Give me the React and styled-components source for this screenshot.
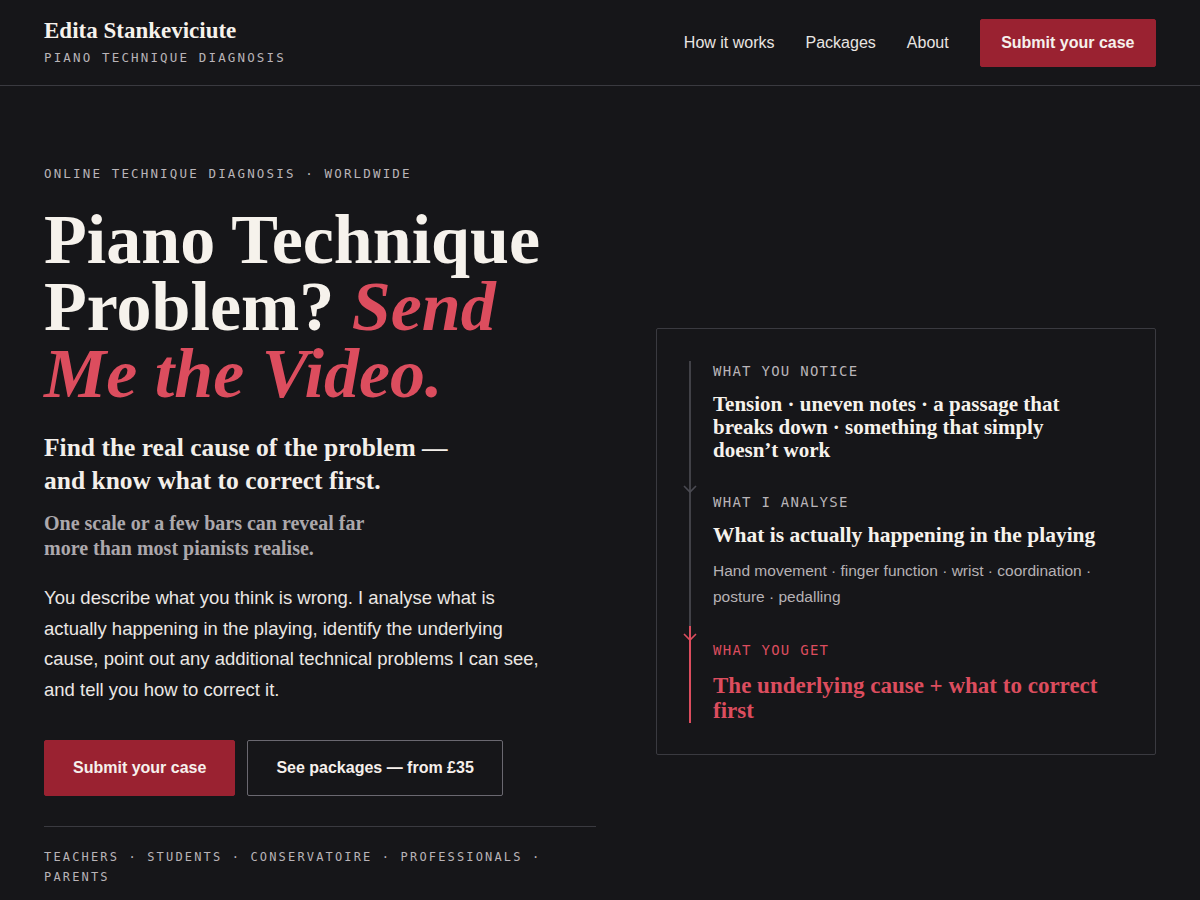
import React from "react";
import styled, { createGlobalStyle } from "styled-components";

const serif = `"Liberation Serif", "DejaVu Serif", serif`;
const sans = `"Liberation Sans", Arial, sans-serif`;
const mono = `"DejaVu Sans Mono", "Liberation Mono", monospace`;

const red = "#dc4d5e";
const buttonRed = "#9a2231";
const line = "#3a3a40";

const Global = createGlobalStyle`
  * { box-sizing: border-box; }
  body {
    margin: 0;
    background: #161619;
    color: #f3efea;
    font-family: ${sans};
  }
`;

const Header = styled.header`
  height: 86px;
  padding: 0 44px;
  display: flex;
  align-items: center;
  justify-content: space-between;
  border-bottom: 1px solid ${line};
`;

const Brand = styled.div`
  display: flex;
  flex-direction: column;
  gap: 8px;
`;

const BrandName = styled.div`
  font-family: ${serif};
  font-weight: 700;
  font-size: 23px;
  line-height: 22px;
  color: #f6f2ec;
`;

const Mono = styled.div`
  font-family: ${mono};
  font-size: ${(p) => p.$size || 12.5}px;
  letter-spacing: ${(p) => p.$spacing || 0.172}em;
  line-height: ${(p) => p.$lh || 16}px;
  color: ${(p) => p.$color || "#b9b4b8"};
  text-transform: uppercase;
`;

const Nav = styled.nav`
  display: flex;
  align-items: center;
  gap: 31px;
`;

const NavLink = styled.a`
  font-size: 16px;
  color: #e9e5e2;
  text-decoration: none;
`;

const Button = styled.a`
  display: inline-flex;
  align-items: center;
  justify-content: center;
  height: ${(p) => p.$h || 56}px;
  padding: 0 ${(p) => p.$px || 28}px;
  border-radius: 2px;
  font-size: 16px;
  font-weight: 700;
  text-decoration: none;
  color: #f6f0ec;
  background: ${(p) => (p.$ghost ? "transparent" : buttonRed)};
  border: 1px solid ${(p) => (p.$ghost ? "#6a6870" : buttonRed)};
`;

const Hero = styled.main`
  display: grid;
  grid-template-columns: 552px 500px;
  justify-content: space-between;
  align-items: start;
  padding: 80px 44px 20px;
`;

const Left = styled.div`
  display: flex;
  flex-direction: column;
`;

const Headline = styled.h1`
  margin: 24px 0 0;
  max-width: 530px;
  font-family: ${serif};
  font-weight: 700;
  font-size: 70px;
  line-height: 67px;
  color: #f6f2ec;
  em {
    color: ${red};
    font-style: italic;
  }
`;

const Lead = styled.p`
  margin: 24px 0 0;
  font-family: ${serif};
  font-weight: 700;
  font-size: 25.5px;
  line-height: 33px;
  color: #f3efea;
`;

const Aside = styled.p`
  margin: 14px 0 0;
  font-family: ${serif};
  font-weight: 700;
  font-size: 20px;
  line-height: 25px;
  color: #aca8ac;
`;

const Body = styled.p`
  margin: 22px 0 0;
  font-size: 18.5px;
  line-height: 30.7px;
  color: #ebe7e4;
  max-width: 516px;
`;

const Actions = styled.div`
  display: flex;
  gap: 12px;
  margin-top: 34px;
`;

const Divider = styled.hr`
  margin: 30px 0 0;
  border: 0;
  border-top: 1px solid ${line};
`;

const Audience = styled(Mono)`
  margin-top: 20px;
`;

const Card = styled.section`
  margin-top: 162px;
  border: 1px solid ${line};
  border-radius: 2px;
  padding: 32px 32px 31px;
`;

const Step = styled.div`
  position: relative;
  border-left: 2px solid ${(p) => (p.$accent ? red : "#414147")};
  padding: ${(p) => (p.$first ? "2px" : "16px")} 0
    ${(p) => (p.$last ? "0" : "16px")} 22px;
  display: flex;
  flex-direction: column;
`;

const Chevron = styled.svg`
  position: absolute;
  left: -8px;
  top: 7px;
`;

const StepLabel = styled(Mono)`
  margin-bottom: ${(p) => p.$after || 14}px;
`;

const StepTitle = styled.div`
  max-width: 395px;
  font-family: ${serif};
  font-weight: 700;
  font-size: ${(p) => p.$size || 21}px;
  line-height: ${(p) => p.$lh || 23}px;
  color: ${(p) => p.$color || "#f6f2ec"};
`;

const StepText = styled.div`
  max-width: 400px;
  font-size: 15.5px;
  line-height: 26px;
  color: #b6b2b5;
  margin-top: 11px;
`;

const Arrow = ({ color }) => (
  <Chevron width="14" height="9" viewBox="0 0 14 9">
    <path d="M1 1 L7 7 L13 1" fill="none" stroke={color} strokeWidth="1.6" />
  </Chevron>
);

export default function App() {
  return (
    <>
      <Global />
      <Header>
        <Brand>
          <BrandName>Edita Stankeviciute</BrandName>
          <Mono>Piano Technique Diagnosis</Mono>
        </Brand>
        <Nav>
          <NavLink href="#">How it works</NavLink>
          <NavLink href="#">Packages</NavLink>
          <NavLink href="#">About</NavLink>
          <Button href="#" $h={48} $px={20.5}>Submit your case</Button>
        </Nav>
      </Header>
      <Hero>
        <Left>
          <Mono>Online technique diagnosis · worldwide</Mono>
          <Headline>
            Piano Technique Problem? <em>Send Me the Video.</em>
          </Headline>
          <Lead>
            Find the real cause of the problem —<br />
            and know what to correct first.
          </Lead>
          <Aside>
            One scale or a few bars can reveal far
            <br />
            more than most pianists realise.
          </Aside>
          <Body>
            You describe what you think is wrong. I analyse what is actually
            happening in the playing, identify the underlying cause, point out
            any additional technical problems I can see, and tell you how to
            correct it.
          </Body>
          <Actions>
            <Button href="#">Submit your case</Button>
            <Button href="#" $ghost>See packages — from £35</Button>
          </Actions>
          <Divider />
          <Audience $size={12} $spacing={0.18} $lh={20}>
            Teachers · Students · Conservatoire · Professionals · Parents
          </Audience>
        </Left>
        <Card>
          <Step $first>
            <StepLabel $size={14} $spacing={0.09}>What you notice</StepLabel>
            <StepTitle>
              Tension · uneven notes · a passage that breaks down · something
              that simply doesn’t work
            </StepTitle>
          </Step>
          <Step>
            <Arrow color="#4a4a52" />
            <StepLabel $size={14} $spacing={0.09}>What I analyse</StepLabel>
            <StepTitle $size={21.5}>What is actually happening in the playing</StepTitle>
            <StepText>
              Hand movement · finger function · wrist · coordination · posture ·
              pedalling
            </StepText>
          </Step>
          <Step $accent $last>
            <Arrow color={red} />
            <StepLabel $size={14} $spacing={0.09} $after={15} $color={red}>
              What you get
            </StepLabel>
            <StepTitle $size={23} $lh={25} $color={red}>
              The underlying cause + what to correct first
            </StepTitle>
          </Step>
        </Card>
      </Hero>
    </>
  );
}
